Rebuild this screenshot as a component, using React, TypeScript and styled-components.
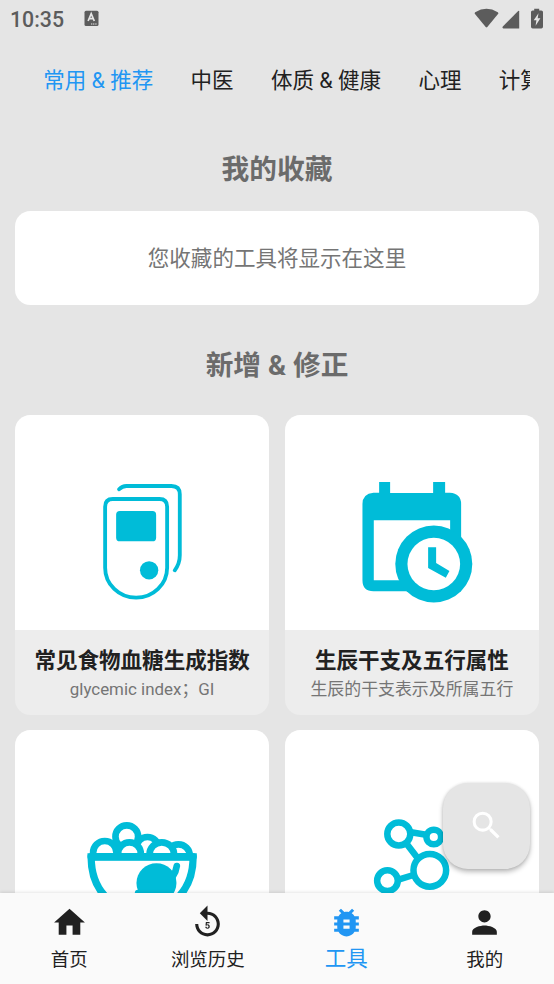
import React from "react";
import styled, { createGlobalStyle } from "styled-components";
import { MdHome, MdReplay5, MdBugReport, MdPerson, MdSearch } from "react-icons/md";

const ACCENT = "#00bcd8";
const BLUE = "#2196f3";

const GlobalStyle = createGlobalStyle`
  * { box-sizing: border-box; }
  body { margin: 0; background: #e5e5e5; }
`;

const Screen = styled.div`
  position: relative;
  display: flex;
  flex-direction: column;
  width: 554px;
  height: 984px;
  overflow: hidden;
  background: #e5e5e5;
  color: #212121;
  font-family: Roboto, "Noto Sans CJK SC", sans-serif;
`;

const StatusBar = styled.header`
  display: flex;
  flex: none;
  align-items: center;
  height: 37px;
  padding: 0 9px 0 10px;
  color: #5c5c5c;
`;

const Clock = styled.span`
  width: 74px;
  padding-top: 2px;
  font-size: 21.3px;
  font-weight: 500;
  line-height: 26px;
`;

const StatusIcons = styled.div`
  display: flex;
  margin-left: auto;
`;

const TabStrip = styled.nav`
  display: flex;
  flex: none;
  align-items: center;
  height: 84px;
  margin: 0 24.5px;
  padding-top: 3px;
  overflow: hidden;
`;

const Tab = styled.span<{ $active?: boolean }>`
  flex: none;
  padding: 0 18.7px;
  font-size: 21.5px;
  line-height: 32px;
  white-space: nowrap;
  color: ${(p) => (p.$active ? BLUE : "#212121")};
`;

const Content = styled.main`
  display: flex;
  flex: 1;
  flex-direction: column;
  min-height: 0;
  padding: 0 15px;
  overflow: hidden;
`;

const Heading = styled.h2<{ $height: number; $lead: number }>`
  flex: none;
  height: ${(p) => p.$height}px;
  margin: 0;
  padding-top: ${(p) => p.$lead}px;
  font-size: 27.7px;
  font-weight: 700;
  line-height: 40px;
  text-align: center;
  color: #6b6b6b;
`;

const EmptyPanel = styled.section`
  display: flex;
  flex: none;
  align-items: center;
  justify-content: center;
  height: 94px;
  padding-bottom: 2px;
  border-radius: 15.4px;
  background: #fff;
  color: #757575;
  font-size: 21.54px;
`;

const Grid = styled.div`
  display: grid;
  grid-template-columns: 1fr 1fr;
  grid-auto-rows: 300px;
  gap: 15px 15.5px;
`;

const Card = styled.article`
  display: flex;
  flex-direction: column;
  overflow: hidden;
  border-radius: 15.4px;
  background: #ededed;
  text-align: center;
`;

const Art = styled.svg`
  display: block;
  flex: none;
  width: 100%;
  height: 215px;
  background: #fff;
`;

const CardTitle = styled.h3`
  margin: 15px 0 0;
  font-size: 21.54px;
  font-weight: 700;
  line-height: 31px;
`;

const CardNote = styled.p`
  margin: 0;
  color: #757575;
  font-size: 16.92px;
  line-height: 26px;
`;

const SearchButton = styled.button`
  position: absolute;
  top: 782.5px;
  left: 443px;
  display: flex;
  align-items: center;
  justify-content: center;
  width: 87px;
  height: 86px;
  padding: 0 1px 1px 0;
  border: 0;
  border-radius: 25px;
  background: #e5e5e5;
  color: #fff;
  box-shadow: 0 3px 5px rgba(0, 0, 0, 0.26), 0 0 3px rgba(0, 0, 0, 0.12);
`;

const BottomNav = styled.nav`
  position: relative;
  display: grid;
  flex: none;
  grid-template-columns: repeat(4, 1fr);
  height: 91px;
  background: #fafafa;
  box-shadow: 0 -1px 3px rgba(0, 0, 0, 0.1);
`;

const NavItem = styled.a<{ $active?: boolean }>`
  display: flex;
  flex-direction: column;
  align-items: center;
  padding-top: 11px;
  color: ${(p) => (p.$active ? BLUE : "#212121")};
  font-size: ${(p) => (p.$active ? 21.54 : 18.46)}px;
  line-height: ${(p) => (p.$active ? 35 : 39)}px;
`;

const ReaderIcon = () => (
  <svg width="15" height="17" viewBox="0 0 15 17">
    <rect x="0.5" y="0.7" width="14" height="15.3" rx="1.5" fill="#5c5c5c" />
    <path d="M4.1 11 7.2 3.6 10.3 11M5.3 8.7h3.8" fill="none" stroke="#e5e5e5" strokeWidth="1.7" />
    <path d="M7 14h6" stroke="#e5e5e5" strokeWidth="1" strokeDasharray="1.2 .6" />
  </svg>
);

const SignalIcons = () => (
  <svg width="72" height="22" viewBox="0 0 72 22" fill="#5c5c5c">
    <path d="M2.200 4.200Q13.500-2.500 24.800 4.200Q25.800 5 25 6L14.300 19Q13.500 19.900 12.700 19L2 6Q1.300 5 2.200 4.200Z" />
    <path d="M29.800 18.600 45.200 2.900Q46.200 2.200 46.200 3.500V20.500H30.300Q28.900 20 29.800 18.600Z" />
    <path d="M61.200 2.400V.7h5v1.700h2.100q1.700 0 1.700 1.700v14.700q0 1.700-1.700 1.700h-8.600q-1.700 0-1.700-1.700V4.100q0-1.700 1.700-1.700Z" />
    <path d="m65.500 5.300-4.800 7h2.700L62.600 17.700l4.800-7.500h-2.700Z" fill="#e5e5e5" />
  </svg>
);

const GlucoseMeter = () => (
  <Art viewBox="0 0 762 645">
    <g transform="translate(195 135)" fill="none" stroke={ACCENT} strokeWidth="11.500" strokeLinecap="round">
      <path d="M75 140q0-23 23-23h140q23 0 23 23V323a93 90 0 0 1-186 0Z" />
      <path d="M117 88q9-10 22-10H274q25 0 25 25V286q0 25-15 45" />
      <rect x="108" y="153" width="120" height="91" rx="11" fill={ACCENT} stroke="none" />
      <circle cx="207" cy="331" r="27.500" fill={ACCENT} stroke="none" />
    </g>
  </Art>
);

const CalendarClock = () => (
  <Art viewBox="0 0 762 645">
    <g transform="translate(165 136)" fill={ACCENT}>
      <path d="M117 65h33v33h129V65h36v32h14q34 2 34 34V360q0 33-34 33H100q-33 0-33-33V131q0-31 33-34h17Z" />
      <path d="M101 180h229v180H101Z" fill="#fff" />
      <circle cx="281" cy="311" r="115.500" />
      <circle cx="281" cy="311" r="79" fill="#fff" />
      <path d="M264 261h24v47l40 24-11 20-53-29Z" />
    </g>
  </Art>
);

const FoodBowl = () => (
  <Art viewBox="0 0 762 645">
    <g transform="translate(165 210)" fill="#fff" stroke={ACCENT} strokeWidth="20">
      <circle cx="232" cy="144" r="33" />
      <circle cx="170" cy="110" r="34" />
      <circle cx="325" cy="167" r="34" />
      <circle cx="275" cy="164" r="37" />
      <circle cx="104" cy="158" r="35" />
      <circle cx="178" cy="161" r="34" />
      <path d="M63 171q0 105 87 152 65 35 132 0 87-47 87-152Z" strokeWidth="22" />
      <path d="M52 170q0-11 12-11H367q13 0 13 11 0 11-13 11H64q-12 0-12-11Z" fill={ACCENT} stroke="none" />
      <ellipse cx="259" cy="249" rx="60" ry="59" fill={ACCENT} stroke="none" />
      <path d="M320 198q-2 16-12 31l-10 36M204 279h94" fill="none" strokeLinecap="round" />
    </g>
  </Art>
);

const Molecule = () => (
  <Art viewBox="0 0 762 645">
    <g transform="translate(195 120)" fill="none" stroke={ACCENT} strokeWidth="19.500">
      <circle cx="146" cy="192" r="34.500" />
      <circle cx="251" cy="201" r="22" />
      <circle cx="239" cy="301" r="49" />
      <circle cx="112" cy="332" r="31" />
      <path d="m183 187 45 7M170 222l34 44M145 329l45-14" />
    </g>
  </Art>
);

const tabs = ["常用 & 推荐", "中医", "体质 & 健康", "心理", "计算"];

const navItems = [
  { label: "首页", Icon: MdHome },
  { label: "浏览历史", Icon: MdReplay5 },
  { label: "工具", Icon: MdBugReport, active: true },
  { label: "我的", Icon: MdPerson },
];

export default function App() {
  return (
    <Screen lang="zh-CN">
      <GlobalStyle />
      <StatusBar>
        <Clock>10:35</Clock>
        <ReaderIcon />
        <StatusIcons>
          <SignalIcons />
        </StatusIcons>
      </StatusBar>
      <TabStrip>
        {tabs.map((tab, i) => (
          <Tab key={tab} $active={i === 0}>{tab}</Tab>
        ))}
      </TabStrip>
      <Content>
        <Heading $height={89.5} $lead={28.5}>我的收藏</Heading>
        <EmptyPanel>您收藏的工具将显示在这里</EmptyPanel>
        <Heading $height={110.5} $lead={41.5}>新增 &amp; 修正</Heading>
        <Grid>
          <Card>
            <GlucoseMeter />
            <CardTitle>常见食物血糖生成指数</CardTitle>
            <CardNote>glycemic index；GI</CardNote>
          </Card>
          <Card>
            <CalendarClock />
            <CardTitle>生辰干支及五行属性</CardTitle>
            <CardNote>生辰的干支表示及所属五行</CardNote>
          </Card>
          <Card>
            <FoodBowl />
          </Card>
          <Card>
            <Molecule />
          </Card>
        </Grid>
      </Content>
      <SearchButton aria-label="搜索">
        <MdSearch size={37} />
      </SearchButton>
      <BottomNav>
        {navItems.map(({ label, Icon, active }) => (
          <NavItem key={label} $active={active}>
            <Icon size={37} />
            {label}
          </NavItem>
        ))}
      </BottomNav>
    </Screen>
  );
}
